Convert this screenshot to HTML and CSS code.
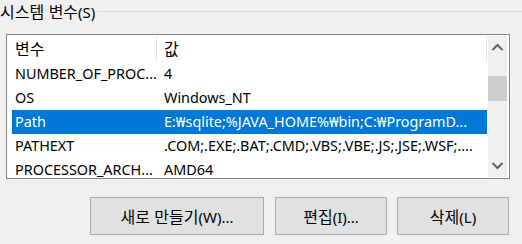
FILE: index.html
```html
<!DOCTYPE html>
<html lang="ko">
<head>
  <meta charset="UTF-8">
  <title>시스템 변수</title>
  <link rel="stylesheet" href="styles.css">
</head>
<body>
  <div class="group-title">
    <span class="label"><span class="ko">시스템 변수</span>(S)</span>
    <div class="rule"></div>
  </div>

  <div class="list">
    <div class="rows">
      <div class="row head">
        <div class="name ko">변수</div>
        <div class="value ko">값</div>
      </div>
      <div class="row">
        <div class="name">NUMBER_OF_PROC...</div>
        <div class="value">4</div>
      </div>
      <div class="row">
        <div class="name">OS</div>
        <div class="value">Windows_NT</div>
      </div>
      <div class="row selected">
        <div class="name">Path</div>
        <div class="value">E:₩sqlite;%JAVA_HOME%₩bin;C:₩ProgramD...</div>
      </div>
      <div class="row">
        <div class="name">PATHEXT</div>
        <div class="value">.COM;.EXE;.BAT;.CMD;.VBS;.VBE;.JS;.JSE;.WSF;....</div>
      </div>
      <div class="row">
        <div class="name">PROCESSOR_ARCH...</div>
        <div class="value">AMD64</div>
      </div>
    </div>
    <div class="scrollbar">
      <svg class="arrow" width="19" height="22" viewBox="0 0 19 22">
        <path d="M4.5 14 L9.5 9 L14.5 14" fill="none" stroke="#606060" stroke-width="2"/>
      </svg>
      <div class="track">
        <div class="thumb"></div>
      </div>
      <svg class="arrow" width="19" height="22" viewBox="0 0 19 22">
        <path d="M4.5 8 L9.5 13 L14.5 8" fill="none" stroke="#606060" stroke-width="2"/>
      </svg>
    </div>
  </div>

  <div class="buttons">
    <button class="wide"><span class="ko">새로 만들기</span>(W)...</button>
    <button><span class="ko">편집</span>(I)...</button>
    <button><span class="ko">삭제</span>(L)</button>
  </div>
</body>
</html>
```

FILE: styles.css
```css
body {
  margin: 0;
  background: #f0f0f0;
  font-family: "Noto Sans", "Noto Sans CJK KR", sans-serif;
  font-size: 14.4px;
  color: #000;
  width: 522px;
  height: 244px;
  overflow: hidden;
}
.ko {
  font-family: "Noto Sans CJK KR", sans-serif;
  font-size: 16px;
}
.group-title {
  display: flex;
  align-items: center;
  height: 23px;
}
.label {
  line-height: 23px;
  padding-right: 2px;
  font-size: 15px;
}
.rule {
  flex: 1;
  height: 1px;
  background: #dcdcdc;
}
.list {
  margin: 11px 0 0 6px;
  width: 502px;
  height: 143px;
  border: 1px solid #828790;
  background: white;
  display: flex;
  overflow: hidden;
}
.rows {
  flex: 1;
  padding-left: 5px;
}
.row {
  display: flex;
  height: 24px;
  line-height: 24px;
  white-space: nowrap;
}
.row.head {
  height: 27px;
}
.name {
  width: 142px;
  padding-left: 3px;
}
.value {
  width: 323px;
  padding-left: 7px;
}
.head .name,
.head .value {
  height: 26px;
  margin-top: 1px;
  line-height: 25px;
  border-right: 1px solid #e5e5e5;
}
.head .name {
  width: 141px;
}
.head .value {
  width: 322px;
}
.selected {
  background: #0078d7;
  color: white;
  width: 475px;
}
.scrollbar {
  width: 19px;
  margin: 1px 2px 1px 0;
  background: #f0f0f0;
  display: flex;
  flex-direction: column;
}
.arrow {
  display: block;
}
.track {
  flex: 1;
  padding-top: 18px;
}
.thumb {
  height: 25px;
  background: #cdcdcd;
}
.buttons {
  display: flex;
  justify-content: flex-end;
  gap: 10px;
  margin: 18px 13px 0 0;
}
button {
  width: 112px;
  height: 38px;
  background: #e1e1e1;
  border: 1px solid #adadad;
  border-radius: 0;
  font-family: "Noto Sans", "Noto Sans CJK KR", sans-serif;
  font-size: 15px;
  color: #000;
  padding: 0;
}
button.wide {
  width: 174px;
  margin-right: 1px;
}
```
